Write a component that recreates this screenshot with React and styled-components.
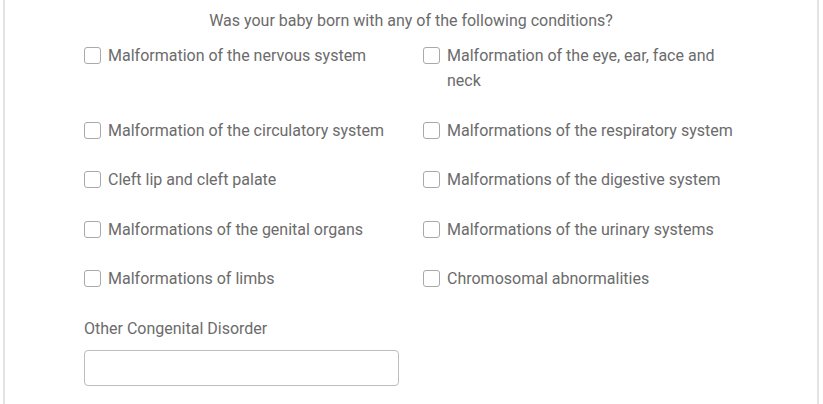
import React from "react";
import styled, { createGlobalStyle } from "styled-components";

const Global = createGlobalStyle`
  body {
    margin: 0;
    background: #fff;
    font-family: Roboto, "Liberation Sans", sans-serif;
  }
`;

const Card = styled.div`
  margin: 0 4px 0 3px;
  height: 404px;
  border-left: 2px solid #e3e3e3;
  border-right: 2px solid #e3e3e3;
  box-sizing: border-box;
  padding: 8px 0 0 79px;
`;

const Title = styled.p`
  margin: 0 0 0 -79px;
  text-align: center;
  font-size: 16px;
  line-height: 25px;
  color: #6b6b6b;
`;

const Grid = styled.div`
  display: grid;
  grid-template-columns: 339px 339px;
  margin-top: 10px;
`;

const Option = styled.label`
  display: flex;
  align-items: flex-start;
  padding-right: 22px;
  margin-bottom: 24.5px;
  font-size: 16px;
  line-height: 25px;
  color: #6b6b6b;
  cursor: pointer;
`;

const Box = styled.span`
  flex: none;
  width: 15px;
  height: 15px;
  margin: 4px 7px 0 0;
  border: 1.5px solid #a9a9a9;
  border-radius: 3px;
  background: #fff;
`;

const Label = styled.p`
  margin: 0 0 9px;
  font-size: 16px;
  line-height: 25px;
  color: #6b6b6b;
`;

const Input = styled.input`
  display: block;
  width: 315px;
  height: 36px;
  box-sizing: border-box;
  border: 1px solid #bdbdbd;
  border-radius: 4px;
  outline: none;
`;

const conditions = [
  "Malformation of the nervous system",
  "Malformation of the eye, ear, face and neck",
  "Malformation of the circulatory system",
  "Malformations of the respiratory system",
  "Cleft lip and cleft palate",
  "Malformations of the digestive system",
  "Malformations of the genital organs",
  "Malformations of the urinary systems",
  "Malformations of limbs",
  "Chromosomal abnormalities",
];

export default function App() {
  return (
    <>
      <Global />
      <Card>
        <Title>Was your baby born with any of the following conditions?</Title>
        <Grid>
          {conditions.map((c) => (
            <Option key={c}>
              <Box />
              {c}
            </Option>
          ))}
        </Grid>
        <Label>Other Congenital Disorder</Label>
        <Input type="text" />
      </Card>
    </>
  );
}
